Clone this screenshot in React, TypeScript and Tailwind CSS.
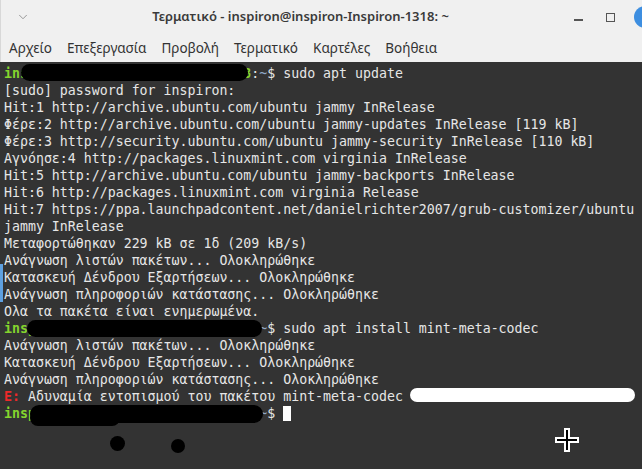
import { ChevronDown, X } from "lucide-react";

const LINES: { text: string; kind?: "prompt" | "error"; cmd?: string }[] = [
  { text: "", kind: "prompt", cmd: "sudo apt update" },
  { text: "[sudo] password for inspiron:" },
  { text: "Hit:1 http://archive.ubuntu.com/ubuntu jammy InRelease" },
  { text: "Φέρε:2 http://archive.ubuntu.com/ubuntu jammy-updates InRelease [119 kB]" },
  { text: "Φέρε:3 http://security.ubuntu.com/ubuntu jammy-security InRelease [110 kB]" },
  { text: "Αγνόησε:4 http://packages.linuxmint.com virginia InRelease" },
  { text: "Hit:5 http://archive.ubuntu.com/ubuntu jammy-backports InRelease" },
  { text: "Hit:6 http://packages.linuxmint.com virginia Release" },
  { text: "Hit:7 https://ppa.launchpadcontent.net/danielrichter2007/grub-customizer/ubuntu" },
  { text: "jammy InRelease" },
  { text: "Μεταφορτώθηκαν 229 kB σε 1δ (209 kB/s)" },
  { text: "Ανάγνωση λιστών πακέτων... Ολοκληρώθηκε" },
  { text: "Κατασκευή Δένδρου Εξαρτήσεων... Ολοκληρώθηκε" },
  { text: "Ανάγνωση πληροφοριών κατάστασης... Ολοκληρώθηκε" },
  { text: "Ολα τα πακέτα είναι ενημερωμένα." },
  { text: "", kind: "prompt", cmd: "sudo apt install mint-meta-codec" },
  { text: "Ανάγνωση λιστών πακέτων... Ολοκληρώθηκε" },
  { text: "Κατασκευή Δένδρου Εξαρτήσεων... Ολοκληρώθηκε" },
  { text: "Ανάγνωση πληροφοριών κατάστασης... Ολοκληρώθηκε" },
  { text: " Αδυναμία εντοπισμού του πακέτου mint-meta-codec", kind: "error" },
  { text: "", kind: "prompt", cmd: "" },
];

const MENU = ["Αρχείο", "Επεξεργασία", "Προβολή", "Τερματικό", "Καρτέλες", "Βοήθεια"];

function Prompt({ cmd, last }: { cmd: string; last?: boolean }) {
  return (
    <>
      <span className="font-bold text-[#84d42e]">inspiron@inspiron-Inspiron-1318</span>
      <span>:</span>
      <span className="text-[#8fa8c8]">~</span>
      <span>$ </span>
      {cmd}
      {last && <span className="inline-block w-[8px] h-[15px] bg-white align-[-3px]" />}
    </>
  );
}

export default function App() {
  return (
    <div className="w-[642px] h-[469px] overflow-hidden flex flex-col bg-[#333333] relative">
      {/* title bar */}
      <div className="h-[34px] bg-[#f0f0f0] flex items-center relative border-l border-[#d8d8d8]" style={{ fontFamily: '"Noto Sans", sans-serif' }}>
        <ChevronDown className="ml-[15px] w-[14px] h-[14px] text-[#8a8a8a]" strokeWidth={1.5} />
        <div className="absolute left-0 right-0 top-0 h-[34px] flex items-center justify-center pr-[42px] text-[13px] font-semibold text-[#3a3a3a] pointer-events-none">
          Τερματικό - inspiron@inspiron-Inspiron-1318: ~
        </div>
        <div className="ml-auto flex items-center">
          <div className="w-[9px] h-[1.5px] bg-[#555] mt-[6px] mr-[23px]" />
          <div className="w-[9px] h-[9px] border border-[#555] mr-[19px]" />
          <div className="w-[22px] h-[22px] rounded-full bg-[#3d8ee0] flex items-center justify-center mr-[-14px]">
            <X className="w-[10px] h-[10px] text-white" strokeWidth={2.5} />
          </div>
        </div>
      </div>
      {/* menu bar */}
      <div className="h-[28px] bg-[#f0f0f0] flex items-center gap-[15px] pl-[8px] text-[13.5px] text-[#333] border-l border-[#d8d8d8]" style={{ fontFamily: '"Noto Sans", sans-serif' }}>
        {MENU.map((m) => (
          <span key={m}>{m}</span>
        ))}
      </div>
      {/* terminal */}
      <div
        className="flex-1 pt-[3px] pl-[4px] text-[13.25px] leading-[17px] text-[#e6e6e6] whitespace-pre relative"
        style={{ fontFamily: '"DejaVu Sans Mono", monospace' }}
      >
        {LINES.map((l, i) => (
          <div key={i} className="h-[17px]">
            {l.kind === "prompt" ? (
              <Prompt cmd={l.cmd ?? ""} last={i === LINES.length - 1} />
            ) : l.kind === "error" ? (
              <>
                <span className="font-bold text-[#ef2929]">E:</span>
                {l.text}
              </>
            ) : (
              l.text
            )}
          </div>
        ))}

        {/* redactions */}
        <div className="absolute left-[21px] top-[2px] w-[227px] h-[17px] rounded-full bg-black" />
        <div className="absolute left-[27px] top-[258px] w-[235px] h-[17px] rounded-full bg-black" />
        <div className="absolute left-[30px] top-[343px] w-[233px] h-[18px] rounded-full bg-black" />
        <div className="absolute left-[30px] top-[348px] w-[90px] h-[16px] rounded-full bg-black" />
        <div className="absolute left-[110px] top-[374px] w-[15px] h-[15px] rounded-full bg-black" />
        <div className="absolute left-[171px] top-[377px] w-[14px] h-[14px] rounded-full bg-black" />
        <div className="absolute left-[410px] top-[326px] w-[225px] h-[14px] rounded-full bg-white" />
        <div className="absolute left-0 top-[202px] w-[3px] h-[38px] bg-[#5ea0e0]" />

        {/* crosshair pointer */}
        <svg className="absolute left-[554px] top-[365px]" width="26" height="26" viewBox="0 0 26 26">
          <path d="M10 1h6v9h9v6h-9v9h-6v-9h-9v-6h9z" fill="white" />
          <path d="M12 3h2v9h9v2h-9v9h-2v-9h-9v-2h9z" fill="black" />
        </svg>
      </div>
    </div>
  );
}
